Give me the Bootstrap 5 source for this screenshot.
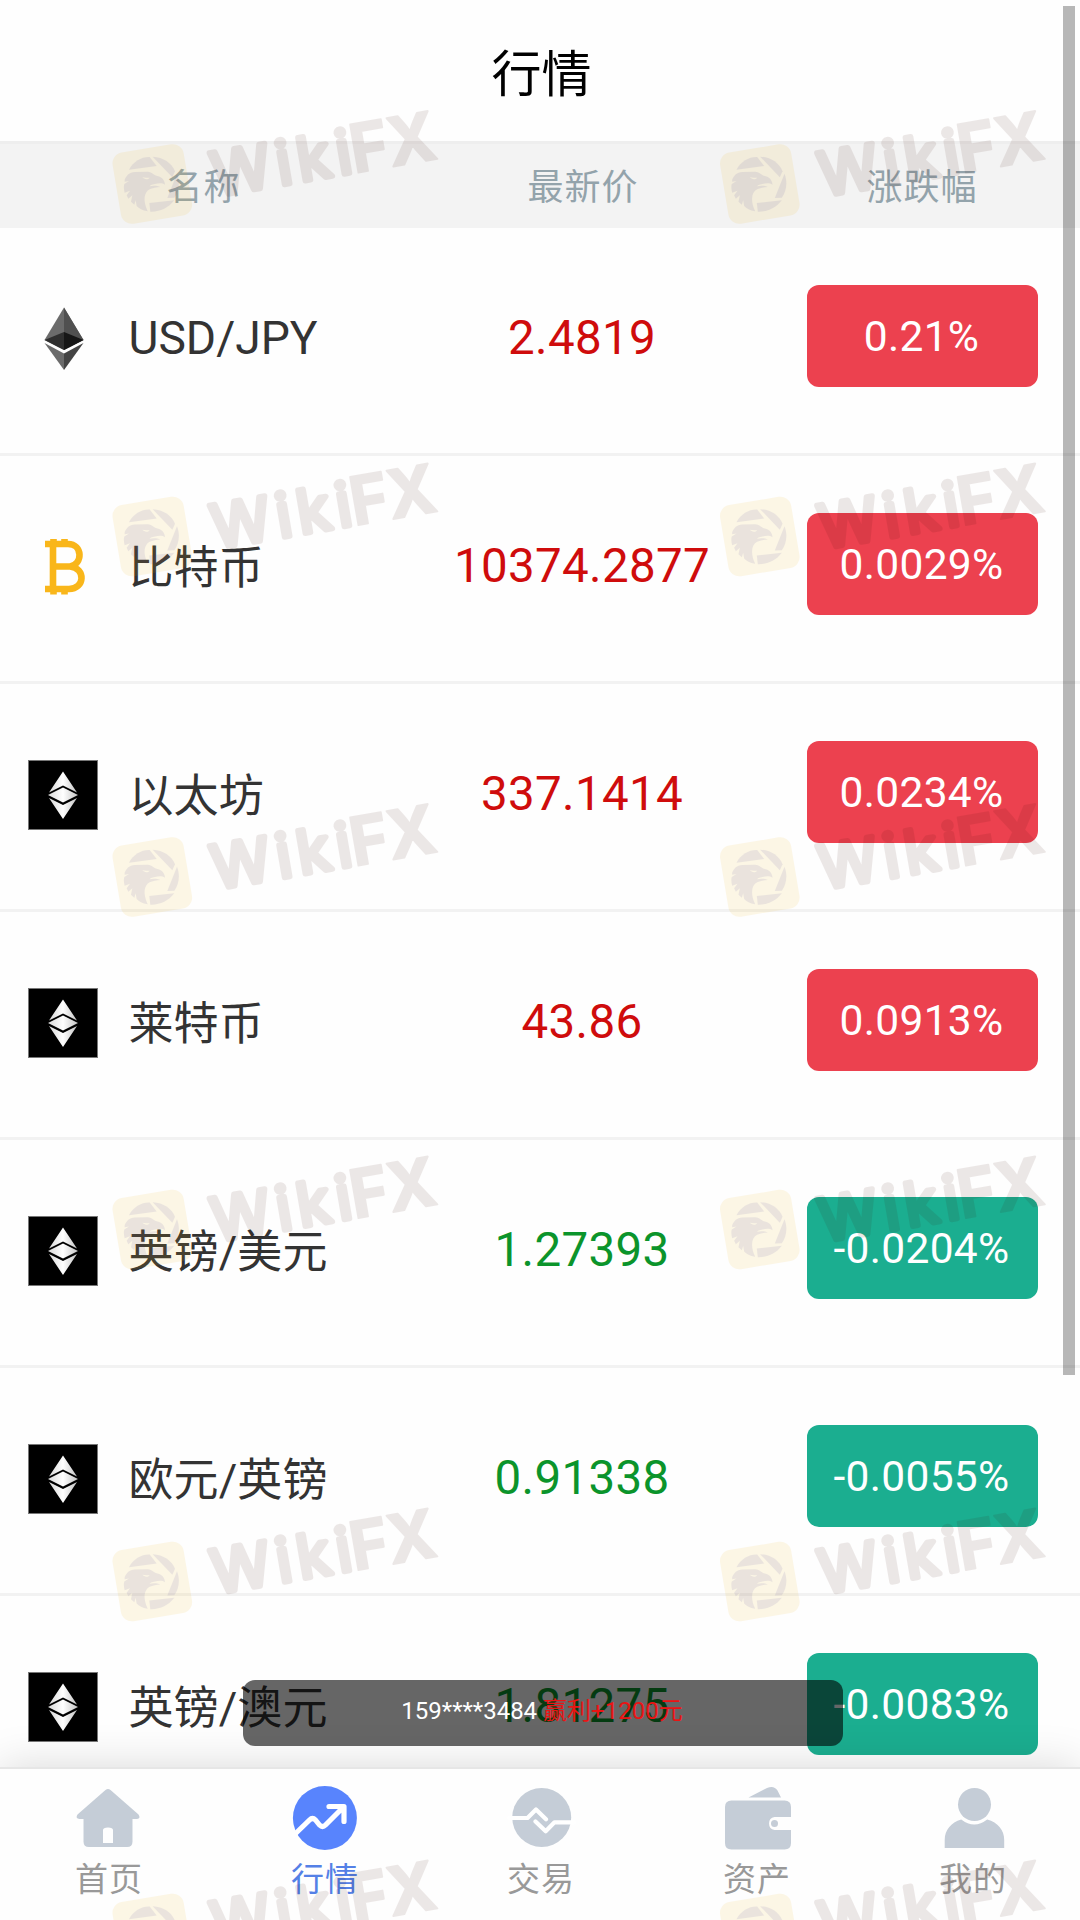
<!DOCTYPE html>
<html lang="zh-CN">
<head>
<meta charset="utf-8">
<meta name="viewport" content="width=device-width, initial-scale=1">
<title>行情</title>
<link href="https://cdn.jsdelivr.net/npm/bootstrap@5.3.0/dist/css/bootstrap.min.css" rel="stylesheet">
<style>
  html, body { height: 1920px; overflow: hidden; }
  body { font-family: Roboto, "Noto Sans CJK SC", sans-serif; background: #fefefe; color: #333; }
  .app { height: 1920px; }
  .page-title { height: 144px; border-bottom: 3px solid #eee; font-size: 50px; line-height: 1; color: #000; padding: 9px 0 0 3px; }
  .head-row { height: 84px; background: #f3f3f3; color: #93a3ab; font-size: 36px; letter-spacing: 1px; line-height: 1; padding: 3px 0 0 1px; }
  .c-name { width: 405px; flex: none; }
  .c-price { width: 354px; flex: none; }
  .c-rate { width: 324px; flex: none; }
  .quote { height: 228px; border-bottom: 3px solid #f2f2f2; line-height: 1; padding-bottom: 9px; }
  .coin { width: 70px; height: 70px; margin: 6px 30.5px 0 28px; flex: none; }
  .pair { font-size: 45px; letter-spacing: .1px; white-space: nowrap; padding-top: 9px; }
  .pair.latin { font-size: 46.2px; letter-spacing: 0; padding-top: 4px; }
  .price { font-size: 47.5px; letter-spacing: .3px; padding-top: 5px; }
  .up { color: #cf0c0c; }
  .down { color: #0b942b; }
  .rate { width: 231px; height: 102px; border-radius: 12px; color: #fff; font-size: 42.5px; letter-spacing: .3px; background: #ec414f; margin-left: 3px; padding: 2px 2px 0 0; }
  .rate.fall { background: #1bae90; }
  .tabs { height: 153px; border-top: 2px solid #e6e6e6; background: #fefefe; box-shadow: 0 0 42px rgba(0,0,0,.15); z-index: 2; }
  .tab-item { width: 216px; color: #999; font-size: 33px; letter-spacing: 1px; line-height: 1; padding-top: 13px; }
  .tab-item svg { width: 72px; height: 72px; fill: #c5cdd7; }
  .tab-item span { margin-top: 9px; padding-left: 2px; }
  .tab-item.on { color: #5480e6; }
  .tab-item.on svg { fill: #5884fd; }
  .toast-bar { left: 243px; top: 1680px; width: 600px; height: 66px; border-radius: 12px; background: rgba(0,0,0,.6); color: #fff; font-size: 24px; z-index: 3; white-space: pre; line-height: 1; padding: 0 2px 4px 0; }
  .win { color: #ea1414; }
  .thumb { right: 5px; top: 6px; width: 12px; height: 1369px; background: rgba(0,0,0,.28); z-index: 4; }
  .stamp { left: 0; top: 0; z-index: 5; pointer-events: none; }
  .wk { font-family: Inter, sans-serif; fill: #3c0a00; stroke: #3c0a00; stroke-linejoin: round; }
</style>
</head>
<body>
<svg width="0" height="0" class="position-absolute">
  <defs>
    <linearGradient id="silver" x1="0" x2="1"><stop offset="0" stop-color="#d8d8d8"/><stop offset=".5" stop-color="#fff"/><stop offset="1" stop-color="#c4c4c4"/></linearGradient>
    <symbol id="eth" viewBox="0 0 70 70">
      <rect x=".5" y=".5" width="69" height="69" fill="#000" stroke="#777"/>
      <g fill="url(#silver)"><path d="M35 11.500 49 32.500 35 25.500 21 32.500Z"/><path d="M35 27.500 50 35 35 42.500 20 35Z"/><path d="M21 38 35 45 49 38 35 59Z"/></g>
    </symbol>
    <g id="wm">
      <g opacity=".1">
        <rect x="-36" y="-36" width="72" height="72" rx="11" fill="#f0b414" transform="translate(152.300 74) rotate(-9.500)"/>
      </g>
      <g opacity=".09" fill="#3c3298" transform="translate(105 22) scale(.3333)">
        <path d="M72 113C85 88 110 74 134 75L155 102Z"/>
        <path d="M143 74C175 76 200 92 210 118L202 136Z"/>
        <path d="M216 125C226 150 222 178 208 197L187 198Z"/>
        <path d="M133 213 208 205C190 228 165 240 136 239Z"/>
        <path fill-rule="evenodd" d="M59 143C65 130 72 121 90 120L128 119C142 120 145 129 160 133C172 136 179 146 180 158C172 152 160 153 150 156C140 158 134 160 134 163C142 160 156 160 166 165C155 166 142 168 134 172C117 181 113 205 128 238C112 236 102 229 95 222L92 205 88 218 78 209 82 190 70 200 65 190 75 176 59 182C56 172 56 160 58 156L72 147 59 149ZM112 136C118 142 128 144 134 137L124 137Z"/>
      </g>
      <g opacity=".092" transform="translate(214.500 88.500) rotate(-9.800)">
        <text class="wk" x="1" y="-2" font-size="60" font-weight="400" stroke-width="5.500" textLength="141" lengthAdjust="spacing">Wiki</text>
        <text class="wk" x="142" y="-1" font-size="67" font-weight="700" stroke-width="2" textLength="86" lengthAdjust="spacingAndGlyphs">FX</text>
      </g>
    </g>
    <g id="wmrow"><use href="#wm"/><use href="#wm" x="607.500"/></g>
  </defs>
</svg>

<div class="app d-flex flex-column position-relative overflow-hidden">
  <header class="page-title d-flex align-items-center justify-content-center flex-shrink-0">行情</header>
  <div class="head-row d-flex align-items-center flex-shrink-0 text-center">
    <div class="c-name">名称</div><div class="c-price">最新价</div><div class="c-rate">涨跌幅</div>
  </div>

  <main class="flex-grow-1 overflow-hidden">
    <div class="quote d-flex align-items-center">
      <div class="c-name d-flex align-items-center">
        <svg class="coin" viewBox="0 0 70 70"><path fill="#6b6b6b" d="M36 3.500 55.500 36 36 46 16.500 36Z"/><path fill="#505050" d="M36 3.500 55.500 36 36 46Z"/><path fill="#2f2f2f" d="M36 28 16.500 36 36 46Z"/><path fill="#161616" d="M36 28 55.500 36 36 46Z"/><path fill="#6b6b6b" d="M16.500 39 36 49.500V66Z"/><path fill="#444" d="M55.500 39 36 49.500V66Z"/></svg>
        <span class="pair latin">USD/JPY</span></div>
      <div class="c-price text-center price up">2.4819</div>
      <div class="c-rate d-flex justify-content-center"><div class="rate d-flex align-items-center justify-content-center">0.21%</div></div>
    </div>
    <div class="quote d-flex align-items-center">
      <div class="c-name d-flex align-items-center">
        <svg class="coin" viewBox="0 0 70 70" fill="none" stroke="#f9b61a" stroke-width="6.600" stroke-linejoin="round"><path d="M17 12H40C55 12 55 32.500 42 34.500H24M42 34.500C58 36 57 57 41 57H17M25 12V57"/><path d="M25.500 13V7M36.500 13V7M25.500 57V62.500M36.500 57V62.500"/></svg>
        <span class="pair">比特币</span></div>
      <div class="c-price text-center price up">10374.2877</div>
      <div class="c-rate d-flex justify-content-center"><div class="rate d-flex align-items-center justify-content-center">0.0029%</div></div>
    </div>
    <div class="quote d-flex align-items-center">
      <div class="c-name d-flex align-items-center"><svg class="coin"><use href="#eth"/></svg><span class="pair">以太坊</span></div>
      <div class="c-price text-center price up">337.1414</div>
      <div class="c-rate d-flex justify-content-center"><div class="rate d-flex align-items-center justify-content-center">0.0234%</div></div>
    </div>
    <div class="quote d-flex align-items-center">
      <div class="c-name d-flex align-items-center"><svg class="coin"><use href="#eth"/></svg><span class="pair">莱特币</span></div>
      <div class="c-price text-center price up">43.86</div>
      <div class="c-rate d-flex justify-content-center"><div class="rate d-flex align-items-center justify-content-center">0.0913%</div></div>
    </div>
    <div class="quote d-flex align-items-center">
      <div class="c-name d-flex align-items-center"><svg class="coin"><use href="#eth"/></svg><span class="pair">英镑/美元</span></div>
      <div class="c-price text-center price down">1.27393</div>
      <div class="c-rate d-flex justify-content-center"><div class="rate fall d-flex align-items-center justify-content-center">-0.0204%</div></div>
    </div>
    <div class="quote d-flex align-items-center">
      <div class="c-name d-flex align-items-center"><svg class="coin"><use href="#eth"/></svg><span class="pair">欧元/英镑</span></div>
      <div class="c-price text-center price down">0.91338</div>
      <div class="c-rate d-flex justify-content-center"><div class="rate fall d-flex align-items-center justify-content-center">-0.0055%</div></div>
    </div>
    <div class="quote d-flex align-items-center">
      <div class="c-name d-flex align-items-center"><svg class="coin"><use href="#eth"/></svg><span class="pair">英镑/澳元</span></div>
      <div class="c-price text-center price down">1.81275</div>
      <div class="c-rate d-flex justify-content-center"><div class="rate fall d-flex align-items-center justify-content-center">-0.0083%</div></div>
    </div>
  </main>

  <nav class="tabs d-flex flex-shrink-0 position-relative">
    <div class="tab-item d-flex flex-column align-items-center">
      <svg viewBox="0 0 72 72"><path fill-rule="evenodd" d="M33.500 8Q36 6 38.500 8L66.500 32.500Q69 36.500 65 37H60.500V59.500Q60.500 65 55 65H17Q11.500 65 11.500 59.500V37H7.500Q3 36.500 5.500 32.500ZM31 61H41V48Q41 45.500 36 45.500T31 48Z"/></svg>
      <span>首页</span></div>
    <div class="tab-item on d-flex flex-column align-items-center">
      <svg viewBox="0 0 72 72"><circle cx="36.900" cy="36" r="32"/><path d="M6 53 21.500 38Q24.500 35 27.500 38L31.500 43Q34.500 46 37.500 43L55.500 25M41 24.500H56V39.500" fill="none" stroke="#fff" stroke-width="5.200" stroke-linecap="round" stroke-linejoin="round"/></svg>
      <span>行情</span></div>
    <div class="tab-item d-flex flex-column align-items-center">
      <svg viewBox="0 0 72 72"><circle cx="37.700" cy="35.500" r="29.500"/><path d="M5 36H23.500L32 27.500 42 37.200M31.500 39.500 41.700 49.300 50.500 40.300H70" fill="none" stroke="#fff" stroke-width="4.200" stroke-linecap="round" stroke-linejoin="round"/></svg>
      <span>交易</span></div>
    <div class="tab-item d-flex flex-column align-items-center">
      <svg viewBox="0 0 72 72"><path d="M28.500 15.500 47 6Q54 3 57.500 8.500L61 15.500ZM11.500 18.500H64.500Q71 18.500 71 25V35H54.500A6.600 6.600 0 0 0 54.500 48H71V61Q71 67.500 64.500 67.500H11.500Q5 67.500 5 61V25Q5 18.500 11.500 18.500Z"/><circle cx="54.500" cy="41.500" r="3.500"/></svg>
      <span>资产</span></div>
    <div class="tab-item d-flex flex-column align-items-center">
      <svg viewBox="0 0 72 72"><circle cx="38.500" cy="22.500" r="16.500"/><path d="M8.700 66V58C8.700 48 15 40.500 25.200 37.500Q38.200 47.500 51.200 37.500C62 40.500 68.200 48 68.200 58V66Z"/></svg>
      <span>我的</span></div>
  </nav>

  <div class="toast-bar position-absolute d-flex align-items-center justify-content-center">159****3484 <span class="win">赢利+1200元</span></div>
  <div class="thumb position-absolute"></div>
  <svg class="stamp position-absolute" width="1080" height="1920" viewBox="0 0 1080 1920">
    <use href="#wmrow" y="110"/><use href="#wmrow" y="462.500"/><use href="#wmrow" y="803"/><use href="#wmrow" y="1155.500"/><use href="#wmrow" y="1507.500"/><use href="#wmrow" y="1859.500"/>
  </svg>
</div>
<script src="https://cdn.jsdelivr.net/npm/bootstrap@5.3.0/dist/js/bootstrap.bundle.min.js"></script>
</body>
</html>
